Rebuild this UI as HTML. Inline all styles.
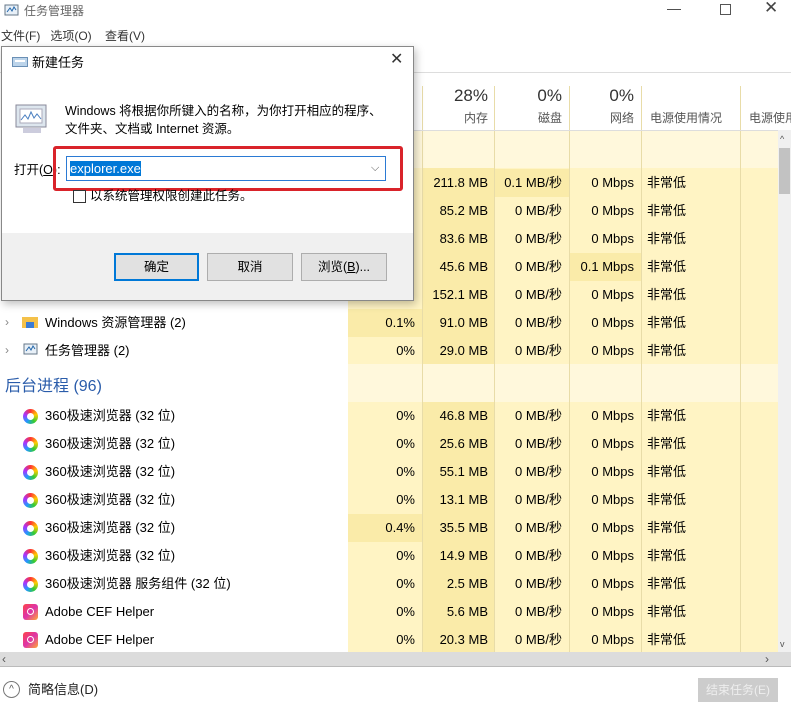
<!DOCTYPE html>
<html><head><meta charset="utf-8"><style>
*{margin:0;padding:0;box-sizing:border-box}
body{width:791px;height:714px;position:relative;background:#fff;font-family:"Liberation Sans","Noto Sans CJK SC",sans-serif;font-size:12px;color:#000;overflow:hidden}
.a{position:absolute;white-space:nowrap;line-height:16px}
.r{text-align:right}
</style></head><body>
<!-- title bar -->
<svg class="a" style="left:4px;top:4px" width="16" height="14"><rect x="1" y="1" width="13" height="10" fill="#e8f0f8" stroke="#678"/><path d="M3 8 L6 4 L8 7 L10 3 L12 6" stroke="#26a" fill="none"/></svg>
<div class="a" style="left:24px;top:3px;color:#666;font-size:12px">任务管理器</div>
<div class="a" style="left:667px;top:0;color:#444;font-size:14px">—</div>
<div class="a" style="left:720px;top:4px;width:11px;height:11px;border:1px solid #555"></div>
<div class="a" style="left:764px;top:-2px;color:#444;font-size:17px;line-height:20px">✕</div>
<div class="a" style="left:1px;top:28px;color:#333">文件(F)&nbsp;&nbsp;&nbsp;选项(O)&nbsp;&nbsp;&nbsp;&nbsp;查看(V)</div>
<div class="a" style="left:0;top:72px;width:791px;height:1px;background:#ddd"></div>

<!-- column backgrounds -->
<div class="a" style="left:348px;top:130px;width:430px;height:522px;background:#fff4c4"></div>
<div class="a" style="left:422px;top:130px;width:72px;height:522px;background:#faeba9"></div>
<div class="a" style="left:348px;top:130px;width:430px;height:38px;background:#fff8dc"></div>
<div class="a" style="left:348px;top:364px;width:430px;height:38px;background:#fff8dc"></div>
<div class="a" style="left:348px;top:309px;width:74px;height:28px;background:#faeba9"></div>
<div class="a" style="left:348px;top:514px;width:74px;height:28px;background:#faeba9"></div>
<div class="a" style="left:494px;top:169px;width:75px;height:28px;background:#faeba9"></div>
<div class="a" style="left:569px;top:253px;width:72px;height:28px;background:#faeba9"></div>
<!-- column lines -->
<div class="a" style="left:422px;top:86px;width:1px;height:566px;background:#e8dca8"></div>
<div class="a" style="left:494px;top:86px;width:1px;height:566px;background:#e8dca8"></div>
<div class="a" style="left:569px;top:86px;width:1px;height:566px;background:#e8dca8"></div>
<div class="a" style="left:641px;top:86px;width:1px;height:566px;background:#e8dca8"></div>
<div class="a" style="left:740px;top:86px;width:1px;height:566px;background:#e8dca8"></div>
<div class="a" style="left:348px;top:130px;width:443px;height:1px;background:#ddd"></div>
<!-- header -->
<div class="a r" style="left:422px;top:86px;width:66px;font-size:17px;line-height:20px;color:#333">28%</div>
<div class="a r" style="left:494px;top:86px;width:68px;font-size:17px;line-height:20px;color:#333">0%</div>
<div class="a r" style="left:569px;top:86px;width:65px;font-size:17px;line-height:20px;color:#333">0%</div>
<div class="a r" style="left:422px;top:110px;width:66px;color:#555">内存</div>
<div class="a r" style="left:494px;top:110px;width:68px;color:#555">磁盘</div>
<div class="a r" style="left:569px;top:110px;width:65px;color:#555">网络</div>
<div class="a" style="left:650px;top:110px;color:#555">电源使用情况</div>
<div class="a" style="left:749px;top:110px;color:#555">电源使用</div>
<!-- vscroll -->
<div class="a" style="left:778px;top:130px;width:13px;height:522px;background:#f0f0f0"></div>
<div class="a" style="left:779px;top:148px;width:11px;height:46px;background:#c2c2c2"></div>
<div class="a" style="left:780px;top:131px;font-size:9px;color:#555">^</div>
<div class="a" style="left:780px;top:636px;font-size:9px;color:#555">v</div>
<!-- hscroll -->
<div class="a" style="left:0;top:652px;width:791px;height:14px;background:#dcdcdc"></div>
<div class="a" style="left:2px;top:651px;color:#555">‹</div>
<div class="a" style="left:765px;top:651px;color:#555">›</div>
<div class="a" style="left:0;top:666px;width:791px;height:1px;background:#bbb"></div>
<!-- footer -->
<div class="a" style="left:3px;top:681px;width:17px;height:17px;border:1px solid #777;border-radius:50%;font-size:10px;text-align:center;line-height:15px;color:#555">^</div>
<div class="a" style="left:28px;top:682px;color:#222;font-size:13px">简略信息(D)</div>
<div class="a" style="left:698px;top:678px;width:80px;height:24px;background:#ccc;color:#eee;text-align:center;line-height:24px">结束任务(E)</div>

<!-- rows -->
<div class="a" style="left:5px;top:314px;color:#888">›</div>
<svg class="a" style="left:22px;top:315px" width="16" height="14"><rect x="0" y="2" width="16" height="11" fill="#f4c14a"/><rect x="4" y="7" width="8" height="6" fill="#3a7bd5"/></svg>
<div class="a" style="left:45px;top:315px;font-size:13px">Windows 资源管理器 (2)</div>
<div class="a" style="left:5px;top:342px;color:#888">›</div>
<svg class="a" style="left:23px;top:343px" width="16" height="14"><rect x="1" y="1" width="13" height="10" fill="#e8f0f8" stroke="#678"/><path d="M3 8 L6 4 L8 7 L10 3 L12 6" stroke="#26a" fill="none"/></svg>
<div class="a" style="left:45px;top:343px;font-size:13px">任务管理器 (2)</div>
<div class="a" style="left:5px;top:377px;color:#2a5caa;font-size:16px;line-height:20px">后台进程 (96)</div>

<div id="rows"></div>
<script>
var cpu=["","","","","","0.1%","0%","","0%","0%","0%","0%","0.4%","0%","0%","0%","0%"];
var mem=["211.8 MB","85.2 MB","83.6 MB","45.6 MB","152.1 MB","91.0 MB","29.0 MB","","46.8 MB","25.6 MB","55.1 MB","13.1 MB","35.5 MB","14.9 MB","2.5 MB","5.6 MB","20.3 MB"];
var dsk=["0.1 MB/秒"];var net=["0 Mbps","0 Mbps","0 Mbps","0.1 Mbps"];
var names={8:"360极速浏览器 (32 位)",9:"360极速浏览器 (32 位)",10:"360极速浏览器 (32 位)",11:"360极速浏览器 (32 位)",12:"360极速浏览器 (32 位)",13:"360极速浏览器 (32 位)",14:"360极速浏览器 服务组件 (32 位)",15:"Adobe CEF Helper",16:"Adobe CEF Helper"};
var h="";
for(var i=0;i<17;i++){ if(i==7)continue;
 var y=i<7?175+i*28:408+(i-8)*28;
 if(cpu[i])h+='<div class="a r" style="left:348px;top:'+y+'px;width:67px;font-size:13px">'+cpu[i]+'</div>';
 h+='<div class="a r" style="left:422px;top:'+y+'px;width:66px;font-size:13px">'+mem[i]+'</div>';
 h+='<div class="a r" style="left:494px;top:'+y+'px;width:68px;font-size:13px">'+(dsk[i]||"0 MB/秒")+'</div>';
 h+='<div class="a r" style="left:569px;top:'+y+'px;width:65px;font-size:13px">'+(net[i]||"0 Mbps")+'</div>';
 h+='<div class="a" style="left:647px;top:'+y+'px;font-size:13px">非常低</div>';
 if(names[i]){
  if(i<15)h+='<div class="a" style="left:23px;top:'+(y+1)+'px;width:15px;height:15px;border-radius:50%;background:conic-gradient(#f33,#fc0,#3c3,#29f,#a3f,#f33)"></div><div class="a" style="left:27px;top:'+(y+5)+'px;width:7px;height:7px;border-radius:50%;background:#fff"></div>';
  else h+='<div class="a" style="left:23px;top:'+y+'px;width:15px;height:16px;border-radius:3px;background:linear-gradient(135deg,#f44,#d3a,#fa3)"></div><div class="a" style="left:27px;top:'+(y+4)+'px;width:7px;height:7px;border-radius:50%;border:1.5px solid #fff"></div>';
  h+='<div class="a" style="left:45px;top:'+y+'px;font-size:13px">'+names[i]+'</div>';
 }
}
document.getElementById("rows").innerHTML=h;
</script>

<!-- dialog -->
<div class="a" style="left:1px;top:46px;width:413px;height:255px;background:#fff;border:1px solid #888;box-shadow:2px 3px 8px rgba(0,0,0,.25)">
 <svg class="a" style="left:10px;top:9px" width="16" height="12"><rect x="0.5" y="1.5" width="15" height="9" fill="#bcd4ea" stroke="#6a8fb5"/><rect x="3" y="4" width="10" height="2" fill="#fff"/></svg>
 <div class="a" style="left:30px;top:8px;font-size:13px">新建任务</div>
 <div class="a" style="left:388px;top:4px;font-size:16px;line-height:18px;color:#333">✕</div>
 <svg class="a" style="left:13px;top:56px" width="34" height="32"><rect x="1" y="2" width="30" height="22" fill="#dde6ee" stroke="#889"/><rect x="5" y="6" width="22" height="14" fill="#fff" stroke="#aab"/><path d="M6 17 L10 12 L13 16 L16 9 L19 15 L22 11 L26 16" stroke="#4a7fc0" fill="none"/><rect x="8" y="25" width="18" height="5" fill="#ccd"/></svg>
 <div class="a" style="left:63px;top:55px;font-size:12.5px;line-height:18px">Windows 将根据你所键入的名称，为你打开相应的程序、<br>文件夹、文档或 Internet 资源。</div>
 <div class="a" style="left:12px;top:115px;font-size:12.5px">打开(<u>O</u>):</div>
 <div class="a" style="left:51px;top:99px;width:350px;height:45px;border:3px solid #d9232a;border-radius:3px"></div>
 <div class="a" style="left:64px;top:109px;width:320px;height:25px;border:1px solid #2b7ad4;background:#fff"></div>
 <div class="a" style="left:68px;top:114px;background:#0078d7;color:#fff;font-size:13px;line-height:15px">explorer.exe</div>
 <div class="a" style="left:369px;top:113px;color:#555;font-size:11px">⌵</div>
 <div class="a" style="left:71px;top:143px;width:13px;height:13px;border:1px solid #333;background:#fff"></div>
 <div class="a" style="left:88px;top:141px;font-size:12.5px">以系统管理权限创建此任务。</div>
 <div class="a" style="left:0;top:186px;width:411px;height:67px;background:#f0f0f0"></div>
 <div class="a" style="left:112px;top:206px;width:85px;height:28px;border:2px solid #0078d7;background:#e1e1e1;text-align:center;line-height:24px;font-size:12.5px">确定</div>
 <div class="a" style="left:205px;top:206px;width:86px;height:28px;border:1px solid #adadad;background:#e1e1e1;text-align:center;line-height:26px;font-size:12.5px">取消</div>
 <div class="a" style="left:299px;top:206px;width:86px;height:28px;border:1px solid #adadad;background:#e1e1e1;text-align:center;line-height:26px;font-size:12.5px">浏览(<u>B</u>)...</div>
</div>
</body></html>
